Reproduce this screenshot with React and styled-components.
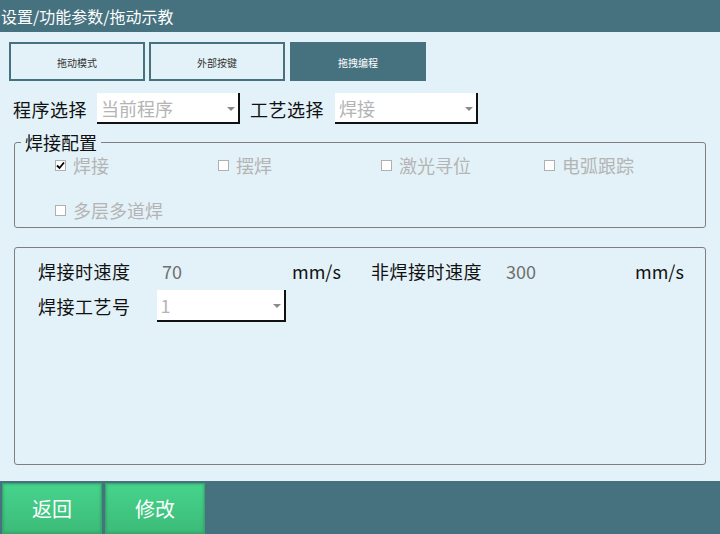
import React from 'react';
import styled, { createGlobalStyle } from 'styled-components';

const GlobalStyle = createGlobalStyle`
  html, body {
    margin: 0;
    padding: 0;
    background: #e3f2f8;
    font-family: "Noto Sans CJK SC", "Noto Sans", sans-serif;
  }
`;

const Page = styled.div`
  width: 720px;
  height: 534px;
  display: flex;
  flex-direction: column;
  background: #e3f2f8;
  overflow: hidden;
`;

const Header = styled.div`
  height: 32px;
  background: #46727f;
  color: #fff;
  font-size: 16px;
  line-height: 32px;
  padding-left: 1px;
  flex-shrink: 0;
`;

const Content = styled.div`
  flex: 1;
  display: flex;
  flex-direction: column;
  padding: 10px 14px 0 14px;
`;

const Tabs = styled.div`
  display: flex;
  gap: 4px;
  margin-left: -5px;
`;

const Tab = styled.div`
  width: 136px;
  height: 39px;
  box-sizing: border-box;
  border: 2px solid #46727f;
  background: ${({ active }) => (active ? '#46727f' : 'transparent')};
  color: ${({ active }) => (active ? '#fff' : '#333')};
  font-size: 10px;
  display: flex;
  align-items: center;
  justify-content: center;
  padding-top: 2px;
  &:nth-child(3) {
    margin-left: 1px;
  }
`;

const SelectRow = styled.div`
  display: flex;
  align-items: center;
  margin-top: 12px;
  margin-left: -1px;
  height: 31px;
`;

const Label = styled.span`
  font-size: 18px;
  color: #111;
  line-height: 24px;
  white-space: nowrap;
  letter-spacing: ${({ wide }) => (wide ? '0.5px' : '0')};
`;

const Combo = styled.div`
  position: relative;
  width: ${({ w }) => w}px;
  height: ${({ h }) => h || 31}px;
  box-sizing: border-box;
  background: #fff;
  border-right: 2px solid #111;
  border-bottom: 2px solid #111;
  margin-left: ${({ ml }) => ml || 0}px;
  margin-right: ${({ mr }) => mr || 0}px;
  display: flex;
  align-items: center;
  padding-left: 4px;
  font-size: 18px;
  color: #b4b4b4;
`;

const Arrow = styled.span`
  position: absolute;
  right: 3px;
  top: 50%;
  margin-top: -1px;
  width: 0;
  height: 0;
  border-left: 4px solid transparent;
  border-right: 4px solid transparent;
  border-top: 4px solid #8a8a8a;
`;

const Group = styled.div`
  position: relative;
  margin-top: 18px;
  height: 86px;
  border: 1px solid #7f7f7f;
  border-radius: 3px;
  box-sizing: border-box;
  padding: 10px 0 0 40px;
`;

const Legend = styled.span`
  position: absolute;
  top: -12px;
  left: 6px;
  padding: 0 4px;
  background: #e3f2f8;
  font-size: 18px;
  line-height: 22px;
  color: #111;
`;

const CheckGrid = styled.div`
  display: grid;
  grid-template-columns: repeat(4, 163px);
  row-gap: 21px;
`;

const CheckItem = styled.div`
  display: flex;
  align-items: center;
  height: 24px;
  font-size: 18px;
  color: #b4b4b4;
  gap: 7px;
`;

const Box = styled.span`
  width: 11px;
  height: 11px;
  box-sizing: border-box;
  border: 1px solid #b0b0b0;
  background: #fff;
  display: flex;
  align-items: center;
  justify-content: center;
`;

const Panel = styled.div`
  margin-top: 19px;
  height: 218px;
  border: 1px solid #7f7f7f;
  border-radius: 3px;
  box-sizing: border-box;
  padding: 11px 0 0 23px;
`;

const SpeedRow = styled.div`
  display: grid;
  grid-template-columns: 124px 130px 79px 135px 129px auto;
  align-items: center;
  height: 24px;
`;

const Value = styled.span`
  font-size: 18px;
  color: #6f6f6f;
  line-height: 24px;
`;

const Unit = styled.span`
  font-size: 18px;
  color: #111;
  line-height: 24px;
`;

const ProcessRow = styled.div`
  display: flex;
  align-items: center;
  margin-top: 7px;
  height: 32px;
`;

const Footer = styled.div`
  height: 53px;
  background: #46727f;
  display: flex;
  gap: 3px;
  padding: 2px 0 0 2px;
  box-sizing: border-box;
  flex-shrink: 0;
`;

const FootButton = styled.div`
  width: 100px;
  height: 51px;
  box-sizing: border-box;
  border: 1px solid #3aa56f;
  background: linear-gradient(#46d48b, #3cbb78);
  box-shadow: inset 0 0 3px rgba(0, 80, 40, 0.35);
  color: #fff;
  font-size: 20px;
  display: flex;
  align-items: center;
  justify-content: center;
`;

function Check({ checked, children }) {
  return (
    <CheckItem>
      <Box>
        {checked && (
          <svg width="9" height="9" viewBox="0 0 9 9">
            <path d="M1 4.5 L3.5 7 L8 1.5" stroke="#000" strokeWidth="1.8" fill="none" />
          </svg>
        )}
      </Box>
      {children}
    </CheckItem>
  );
}

export default function App() {
  return (
    <Page>
      <GlobalStyle />
      <Header>设置/功能参数/拖动示教</Header>
      <Content>
        <Tabs>
          <Tab>拖动模式</Tab>
          <Tab>外部按键</Tab>
          <Tab active>拖拽编程</Tab>
        </Tabs>
        <SelectRow>
          <Label wide>程序选择</Label>
          <Combo w={143} ml={10} mr={10}>当前程序<Arrow /></Combo>
          <Label wide>工艺选择</Label>
          <Combo w={143} ml={11}>焊接<Arrow /></Combo>
        </SelectRow>
        <Group>
          <Legend>焊接配置</Legend>
          <CheckGrid>
            <Check checked>焊接</Check>
            <Check>摆焊</Check>
            <Check>激光寻位</Check>
            <Check>电弧跟踪</Check>
            <Check>多层多道焊</Check>
          </CheckGrid>
        </Group>
        <Panel>
          <SpeedRow>
            <Label wide>焊接时速度</Label>
            <Value>70</Value>
            <Unit>mm/s</Unit>
            <Label wide>非焊接时速度</Label>
            <Value>300</Value>
            <Unit>mm/s</Unit>
          </SpeedRow>
          <ProcessRow>
            <Label wide>焊接工艺号</Label>
            <Combo w={129} h={32} ml={26}>1<Arrow /></Combo>
          </ProcessRow>
        </Panel>
      </Content>
      <Footer>
        <FootButton>返回</FootButton>
        <FootButton>修改</FootButton>
      </Footer>
    </Page>
  );
}
